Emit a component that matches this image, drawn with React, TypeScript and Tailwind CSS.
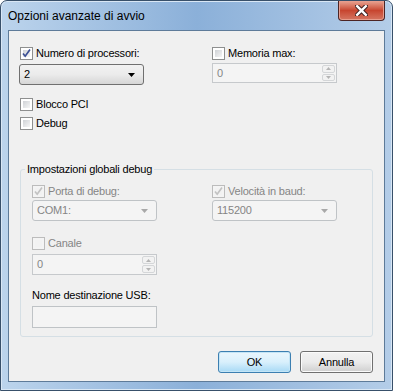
import { ReactNode } from "react";

type CheckProps = {
  label: string;
  checked?: boolean;
  disabled?: boolean;
};

const Checkbox = ({ label, checked = false, disabled = false }: CheckProps) => (
  <div className="flex items-center h-[15px]">
    <span
      className={`relative flex w-[13px] h-[13px] border p-[2px] ${
        disabled ? "border-[#bcbcbc] bg-[#f4f4f4]" : "border-[#8e8f8f] bg-white"
      }`}
    >
      <span
        className={`w-full h-full ${
          disabled
            ? "bg-[#f2f2f2]"
            : "bg-gradient-to-br from-[#cfd2d6] to-[#f6f6f6]"
        }`}
      />
      {checked && (
        <svg
          viewBox="0 0 13 13"
          className="absolute inset-[-1px] w-[13px] h-[13px]"
        >
          <path
            d="M3 6.5 L5.2 9.2 L10 2.6"
            fill="none"
            stroke={disabled ? "#c2c2c2" : "#3b4f94"}
            strokeWidth="1.7"
          />
        </svg>
      )}
    </span>
    <span className={`ml-[3px] ${disabled ? "text-[#858585]" : "text-black"}`}>
      {label}
    </span>
  </div>
);

const Arrow = ({ color }: { color: string }) => (
  <svg viewBox="0 0 7 4" className="w-[7px] h-[4px]">
    <path d="M0 0 L7 0 L3.5 4 Z" fill={color} />
  </svg>
);

type ComboProps = {
  value: string;
  disabled?: boolean;
  className?: string;
};

const Combo = ({ value, disabled = false, className = "" }: ComboProps) => (
  <div
    className={`flex items-center justify-between w-[125px] rounded-[3px] border pl-[4px] pr-[8px] ${className} ${
      disabled
        ? "border-[#bfc3c6] bg-[#f4f4f4] text-[#858585]"
        : "border-[#707070] bg-gradient-to-b from-[#f2f2f2] via-[#ebebeb] to-[#d6d6d6] text-black"
    }`}
  >
    <span>{value}</span>
    <Arrow color={disabled ? "#a8a8a8" : "#000000"} />
  </div>
);

const SpinBox = ({ value, className = "" }: { value: string; className?: string }) => (
  <div
    className={`flex items-stretch w-[125px] border border-[#c6c9cc] bg-[#f4f4f4] text-[#858585] ${className}`}
  >
    <span className="flex-1 flex items-center pl-[4px]">{value}</span>
    <div className="flex flex-col w-[15px] p-[1px] gap-[1px]">
      <div className="flex-1 flex items-center justify-center border border-[#d4d6d8] bg-[#f2f2f2] rounded-[2px]">
        <svg viewBox="0 0 5 3" className="w-[5px] h-[3px]">
          <path d="M0 3 L5 3 L2.5 0 Z" fill="#b4b4b4" />
        </svg>
      </div>
      <div className="flex-1 flex items-center justify-center border border-[#d4d6d8] bg-[#f2f2f2] rounded-[2px]">
        <svg viewBox="0 0 5 3" className="w-[5px] h-[3px]">
          <path d="M0 0 L5 0 L2.5 3 Z" fill="#b4b4b4" />
        </svg>
      </div>
    </div>
  </div>
);

const Button = ({ children, primary = false }: { children: ReactNode; primary?: boolean }) => (
  <button
    className={`w-[73px] h-[22px] rounded-[3px] border text-black ${
      primary
        ? "border-[#3c7fb1] bg-gradient-to-b from-[#eaf6fd] via-[#d9f0fc] to-[#a7d9f5] shadow-[inset_0_0_0_1px_#c4e5f6]"
        : "border-[#707070] bg-gradient-to-b from-[#f2f2f2] via-[#ebebeb] to-[#cfcfcf] shadow-[inset_0_0_0_1px_#fbfbfb]"
    }`}
  >
    {children}
  </button>
);

export default function App() {
  return (
    <div className="w-[393px] h-[391px] overflow-hidden font-['Liberation_Sans','Arial',sans-serif] text-[11px] tracking-[-0.2px] leading-[15px]">
      <div className="w-full h-full rounded-t-[7px] border border-[#38506a] bg-gradient-to-r from-[#bcd4ec] via-[#8bb0d9] to-[#b4cde8] shadow-[inset_0_0_0_1px_#d9e7f5] flex flex-col">
        <div className="flex items-start justify-between h-[29px] pl-[7px] pr-[7px]">
          <span className="mt-[8px] text-[12px] tracking-normal text-black">
            Opzioni avanzate di avvio
          </span>
          <div className="w-[47px] h-[20px] rounded-b-[4px] border border-t-0 border-[#4c2424] bg-gradient-to-b from-[#e8a493] via-[#c7452f] to-[#d57561] flex items-center justify-center shadow-[inset_0_0_0_1px_#e79d8d]">
            <svg viewBox="0 0 12 10" className="w-[13px] h-[11px]">
              <path
                d="M2 1 L10 9 M10 1 L2 9"
                stroke="#3a1d1d"
                strokeWidth="4"
                strokeLinecap="square"
              />
              <path
                d="M2 1 L10 9 M10 1 L2 9"
                stroke="#ffffff"
                strokeWidth="2.2"
                strokeLinecap="square"
              />
            </svg>
          </div>
        </div>

        <div className="mx-[7px] mb-[8px] flex-1 border border-[#5e7b99] bg-[#f0f0f0] px-[10px] pt-[15px]">
          <div className="flex">
            <div className="w-[193px]">
              <div className="pl-[1px]">
                <Checkbox label="Numero di processori:" checked />
              </div>
              <Combo value="2" className="mt-[3px] h-[21px]" />
              <div className="pl-[1px] mt-[12px]">
                <Checkbox label="Blocco PCI" />
              </div>
              <div className="pl-[1px] mt-[4px]">
                <Checkbox label="Debug" />
              </div>
            </div>
            <div>
              <Checkbox label="Memoria max:" />
              <SpinBox value="0" className="mt-[2px] h-[20px]" />
            </div>
          </div>

          <fieldset className="mt-[31px] ml-[1px] w-[353px] h-[175px] border border-[#d5dfe5] rounded-[3px] px-[11px] pt-[7px] min-w-0">
            <legend className="ml-[-7px] px-[2px] text-black">Impostazioni globali debug</legend>
            <div className="flex">
              <div className="w-[180px]">
                <Checkbox label="Porta di debug:" checked disabled />
                <Combo value="COM1:" disabled className="mt-[1px] h-[21px]" />
                <div className="mt-[15px]">
                  <Checkbox label="Canale" disabled />
                </div>
                <SpinBox value="0" className="mt-[3px] h-[21px]" />
                <div className="mt-[13px] text-black">Nome destinazione USB:</div>
                <div className="mt-[3px] w-[125px] h-[22px] border border-[#bfc3c6] bg-[#f4f4f4]" />
              </div>
              <div>
                <Checkbox label="Velocità in baud:" checked disabled />
                <Combo value="115200" disabled className="mt-[1px] h-[21px]" />
              </div>
            </div>
          </fieldset>

          <div className="flex justify-end gap-[9px] mt-[14px] pr-[1px]">
            <Button primary>OK</Button>
            <Button>Annulla</Button>
          </div>
        </div>
      </div>
    </div>
  );
}
